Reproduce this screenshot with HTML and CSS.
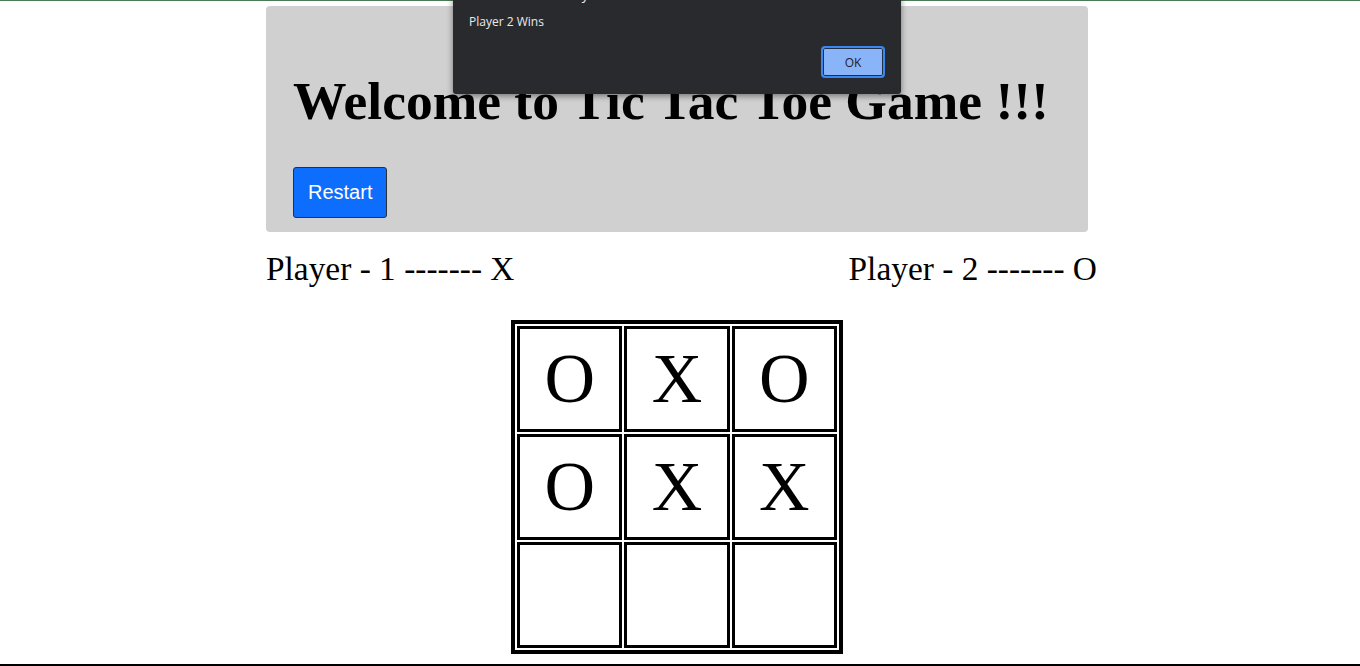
FILE: index.html
```html
<!DOCTYPE html>
<html lang="en">
<head>
<meta charset="utf-8">
<title>Tic Tac Toe</title>
<link rel="stylesheet" href="styles.css">
</head>
<body>
<div class="topline"></div>
<div class="page">
  <div class="banner">
    <h1 class="title">Welcome to Tic Tac Toe Game !!!</h1>
    <button class="restart" type="button">Restart</button>
  </div>
  <div class="players">
    <div class="player">Player - 1 ------- X</div>
    <div class="player player-two">Player - 2 ------- O</div>
  </div>
  <table class="board">
    <tr><td>O</td><td>X</td><td>O</td></tr>
    <tr><td>O</td><td>X</td><td>X</td></tr>
    <tr><td></td><td></td><td></td></tr>
  </table>
</div>
<div class="bottomline"></div>

<div class="dialog">
  <div class="dialog-title">127.0.0.1:5500 says</div>
  <div class="dialog-msg">Player 2 Wins</div>
  <div class="dialog-actions">
    <button class="dialog-ok" type="button">OK</button>
  </div>
</div>
</body>
</html>
```

FILE: styles.css
```css
html, body {
  margin: 0;
  padding: 0;
  background: #ffffff;
  overflow: hidden;
}

body {
  font-family: "Liberation Serif", "Times New Roman", serif;
  color: #000;
  height: 666px;
  position: relative;
}

.topline {
  height: 1px;
  background: #4a7b56;
}

.page {
  width: 1354px;
}

.banner {
  box-sizing: border-box;
  width: 822px;
  margin: 5px auto 0;
  padding: 28px 27px 14px;
  background: #d0d0d0;
  border-radius: 4px;
}

.title {
  margin: 37px 0 36px;
  font-size: 53.5px;
  line-height: 60px;
  font-weight: bold;
  white-space: nowrap;
}

.restart {
  display: block;
  box-sizing: border-box;
  height: 51px;
  padding: 0 14px;
  font-family: "Liberation Sans", Arial, sans-serif;
  font-size: 20px;
  color: #fff;
  background: #0d6efd;
  border: 1px solid #2b2f36;
  border-radius: 3px;
}

.players {
  display: flex;
  justify-content: space-between;
  width: 822px;
  margin: 18px auto 0;
  font-size: 33.4px;
  line-height: 38px;
}

.player-two {
  margin-right: -9px;
}

.board {
  margin: 32px auto 0;
  border: 4px solid #000;
  border-spacing: 2px;
  table-layout: fixed;
  width: 332px;
}

.board td {
  border: 3px solid #000;
  height: 100px;
  padding: 0;
  text-align: center;
  vertical-align: middle;
  font-size: 70px;
  line-height: 1;
}

.bottomline {
  margin-top: 10px;
  height: 2px;
  background: #000;
}

.dialog {
  position: absolute;
  left: 453px;
  top: -32px;
  width: 448px;
  box-sizing: border-box;
  padding: 16px 16px 16px;
  background: #292a2d;
  border-radius: 0 0 3px 3px;
  box-shadow: 0 2px 6px rgba(0, 0, 0, 0.45);
  font-family: "Open Sans", "Noto Sans", sans-serif;
  color: #e8eaed;
}

.dialog-title {
  font-size: 14px;
  line-height: 20px;
}

.dialog-msg {
  margin-top: 10px;
  font-size: 12px;
  line-height: 16px;
}

.dialog-actions {
  display: flex;
  justify-content: flex-end;
  margin-top: 16px;
}

.dialog-ok {
  box-sizing: border-box;
  width: 64px;
  height: 32px;
  margin-right: 0;
  padding: 0;
  font-family: "Open Sans", "Noto Sans", sans-serif;
  font-size: 12px;
  color: #202124;
  background: #8ab4f8;
  border: 2px solid #3c86f0;
  border-radius: 4px;
  box-shadow: inset 0 0 0 1px #1f2f4a;
}
```
